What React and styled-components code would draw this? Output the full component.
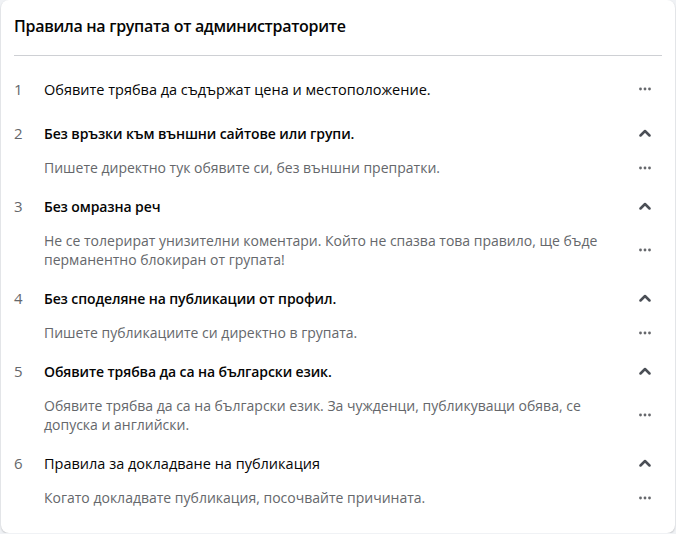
import styled, { createGlobalStyle } from 'styled-components';

const GlobalStyle = createGlobalStyle`
  body {
    margin: 0;
    background: #f0f2f5;
    font-family: 'Open Sans', 'Noto Sans', sans-serif;
  }
`;

const Card = styled.div`
  width: 674px;
  margin: 0 1px;
  background: #fff;
  border-radius: 8px;
  box-shadow: 0 1px 2px rgba(0, 0, 0, 0.2);
`;

const Header = styled.div`
  padding: 16px 13px 0;
`;

const Title = styled.h2`
  margin: 0;
  font-size: 16px;
  line-height: 20px;
  font-weight: 600;
  color: #050505;
  letter-spacing: -0.3px;
`;

const Divider = styled.hr`
  margin: 19px 0 0;
  border: 0;
  border-top: 1px solid #ced0d4;
`;

const List = styled.ol`
  list-style: none;
  margin: 0;
  padding: 13px 12px 17px 13px;
`;

const Rule = styled.li`
  padding: ${(p) => (p.open ? '10px 0 9px' : '10px 0 14px')};
`;

const Row = styled.div`
  display: grid;
  grid-template-columns: 30px 1fr 36px;
  align-items: center;
`;

const RuleHead = styled(Row)`
  height: 20px;
`;

const RuleBody = styled(Row)`
  margin-top: 15px;
`;

const Num = styled.span`
  font-size: 15px;
  color: #65676b;
`;

const RuleTitle = styled.span`
  font-size: ${(p) => (p.light ? '14.5px' : '14px')};
  font-weight: ${(p) => (p.light ? 500 : 600)};
  color: #050505;
  letter-spacing: ${(p) => (p.light ? '0' : '-0.1px')};
`;

const Desc = styled.p`
  grid-column: 2;
  margin: 0;
  font-size: 14px;
  line-height: 19px;
  color: #65676b;
`;

const IconBtn = styled.span`
  display: flex;
  justify-content: center;
  align-items: center;
  color: #65676b;
  width: 36px;
`;

const Dots = () => (
  <svg width="12" height="4" viewBox="0 0 12 4">
    <circle cx="1.5" cy="2" r="1.4" fill="currentColor" />
    <circle cx="6" cy="2" r="1.4" fill="currentColor" />
    <circle cx="10.5" cy="2" r="1.4" fill="currentColor" />
  </svg>
);

const ChevronUp = () => (
  <svg width="12" height="8" viewBox="0 0 12 8">
    <path d="M1.5 6.5 L6 2 L10.5 6.5" fill="none" stroke="#4b4f56" strokeWidth="2.5" strokeLinecap="round" strokeLinejoin="round" />
  </svg>
);

const rules = [
  { title: 'Обявите трябва да съдържат цена и местоположение.', light: true },
  { title: 'Без връзки към външни сайтове или групи.', desc: 'Пишете директно тук обявите си, без външни препратки.' },
  {
    title: 'Без омразна реч',
    desc: 'Не се толерират унизителни коментари. Който не спазва това правило, ще бъде перманентно блокиран от групата!',
  },
  { title: 'Без споделяне на публикации от профил.', desc: 'Пишете публикациите си директно в групата.' },
  {
    title: 'Обявите трябва да са на български език.',
    desc: 'Обявите трябва да са на български език. За чужденци, публикуващи обява, се допуска и английски.',
  },
  { title: 'Правила за докладване на публикация', desc: 'Когато докладвате публикация, посочвайте причината.', light: true },
];

export default function App() {
  return (
    <>
      <GlobalStyle />
      <Card>
        <Header>
          <Title>Правила на групата от администраторите</Title>
          <Divider />
        </Header>
        <List>
          {rules.map((r, i) => (
            <Rule key={i} open={!!r.desc}>
              <RuleHead>
                <Num>{i + 1}</Num>
                <RuleTitle light={r.light}>{r.title}</RuleTitle>
                <IconBtn>{r.desc ? <ChevronUp /> : <Dots />}</IconBtn>
              </RuleHead>
              {r.desc && (
                <RuleBody>
                  <Desc>{r.desc}</Desc>
                  <IconBtn>
                    <Dots />
                  </IconBtn>
                </RuleBody>
              )}
            </Rule>
          ))}
        </List>
      </Card>
    </>
  );
}
